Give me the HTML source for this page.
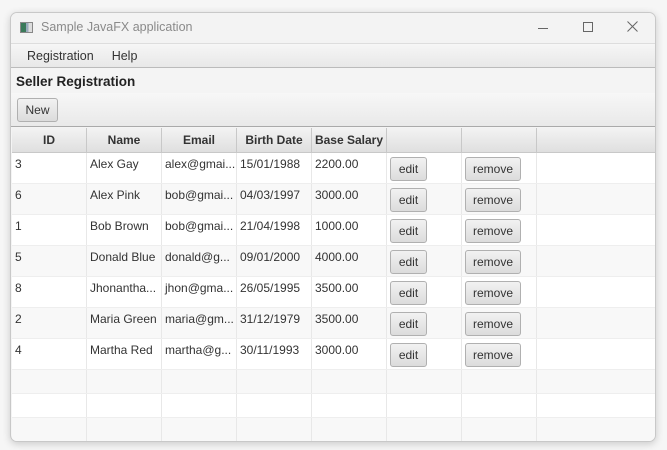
<!DOCTYPE html>
<html><head><style>
*{box-sizing:border-box;margin:0;padding:0}
body{width:667px;height:450px;background:#f6f6f6;font-family:"Liberation Sans",sans-serif;font-size:12px;color:#333;position:relative;overflow:hidden}
.win{position:absolute;left:10px;top:12px;width:646px;height:430px;border:1px solid #c8c8c8;border-radius:7px;background:#f4f4f4;box-shadow:0 2px 8px rgba(0,0,0,.18);overflow:hidden}
.title{height:30px;background:#f3f3f3;position:relative;color:#8a8a8a;font-size:12.5px}
.title .ic{position:absolute;left:9px;top:9px;width:13px;height:11px;border:1px solid #888;background:linear-gradient(90deg,#3a7a5a 0 45%,#9ab 45% 70%,#ddd 70%)}
.title .t{position:absolute;left:30px;top:7px}
.menu{height:25px;border-top:1px solid #ddd;border-bottom:1px solid #bbb;background:linear-gradient(#f6f6f6,#e8e8e8);padding:5px 0 0 16px;font-size:12.5px}
.menu span{margin-right:18px}
.lbl{height:25px;padding:6px 0 0 5px;font-weight:bold;font-size:13.5px;color:#222}
.tb{height:34px;background:linear-gradient(#f7f7f7,#e9e9e9);border-bottom:1px solid #aaa;padding:5px 0 0 6px}
.btn{display:inline-block;border:1px solid #b0b0b0;border-radius:3px;background:linear-gradient(#f2f2f2,#dcdcdc);height:24px;text-align:center;line-height:22px;font-size:12px;color:#333}
.tbl{position:absolute;left:1px;top:115px;width:644px}
.row{height:31px;position:relative;border-bottom:1px solid #eee}
.c{position:absolute;top:0;height:100%;border-right:1px solid #e8e8e8;padding:4px 0 0 3px;white-space:nowrap;overflow:hidden}
.hd{height:25px;background:linear-gradient(#f3f3f3,#dfdfdf);border-bottom:1px solid #c8c8c8;position:relative;font-weight:bold;color:#333}
.hd .c{border-right:1px solid #c8c8c8;text-align:center;padding:5px 0 0}
.e{height:24px}
</style></head><body>
<div class="win">
<div class="title"><div class="ic"></div><div class="t">Sample JavaFX application</div>
<div style="position:absolute;left:527px;top:15px;width:10px;border-top:1px solid #666"></div>
<div style="position:absolute;left:572px;top:9px;width:10px;height:10px;border:1px solid #666"></div>
<svg style="position:absolute;left:616px;top:8px" width="11" height="11"><path d="M0.5 0.5L10.5 10.5M10.5 0.5L0.5 10.5" stroke="#666" stroke-width="1"/></svg>
</div>
<div class="menu"><span>Registration</span><span>Help</span></div>
<div class="lbl">Seller Registration</div>
<div class="tb"><span class="btn" style="width:41px">New</span></div>
<div class="tbl" id="t"></div>
</div>
<script>
var xs=[0,75,150,225,300,375,450,525,644];
var h='<div class="hd">';var H=['ID','Name','Email','Birth Date','Base Salary','','',''];
for(var i=0;i<8;i++)h+='<div class="c" style="left:'+xs[i]+'px;width:'+(xs[i+1]-xs[i])+'px">'+H[i]+'</div>';
h+='</div>';
var D=[['3','Alex Gay','alex@gmai...','15/01/1988','2200.00'],['6','Alex Pink','bob@gmai...','04/03/1997','3000.00'],['1','Bob Brown','bob@gmai...','21/04/1998','1000.00'],['5','Donald Blue','donald@g...','09/01/2000','4000.00'],['8','Jhonantha...','jhon@gma...','26/05/1995','3500.00'],['2','Maria Green','maria@gm...','31/12/1979','3500.00'],['4','Martha Red','martha@g...','30/11/1993','3000.00']];
for(var r=0;r<10;r++){var d=D[r];h+='<div class="row'+(r>6?' e':'')+'" style="background:'+(r%2?'#f8f8f8':'#fff')+'">';
for(var i=0;i<8;i++){var s='';if(d){if(i<5)s=d[i];else if(i==5)s='<span class="btn" style="width:37px">edit</span>';else if(i==6)s='<span class="btn" style="width:56px">remove</span>';}
h+='<div class="c" style="left:'+xs[i]+'px;width:'+(xs[i+1]-xs[i])+'px">'+s+'</div>';}
h+='</div>';}
document.getElementById('t').innerHTML=h;
</script>
</body></html>
